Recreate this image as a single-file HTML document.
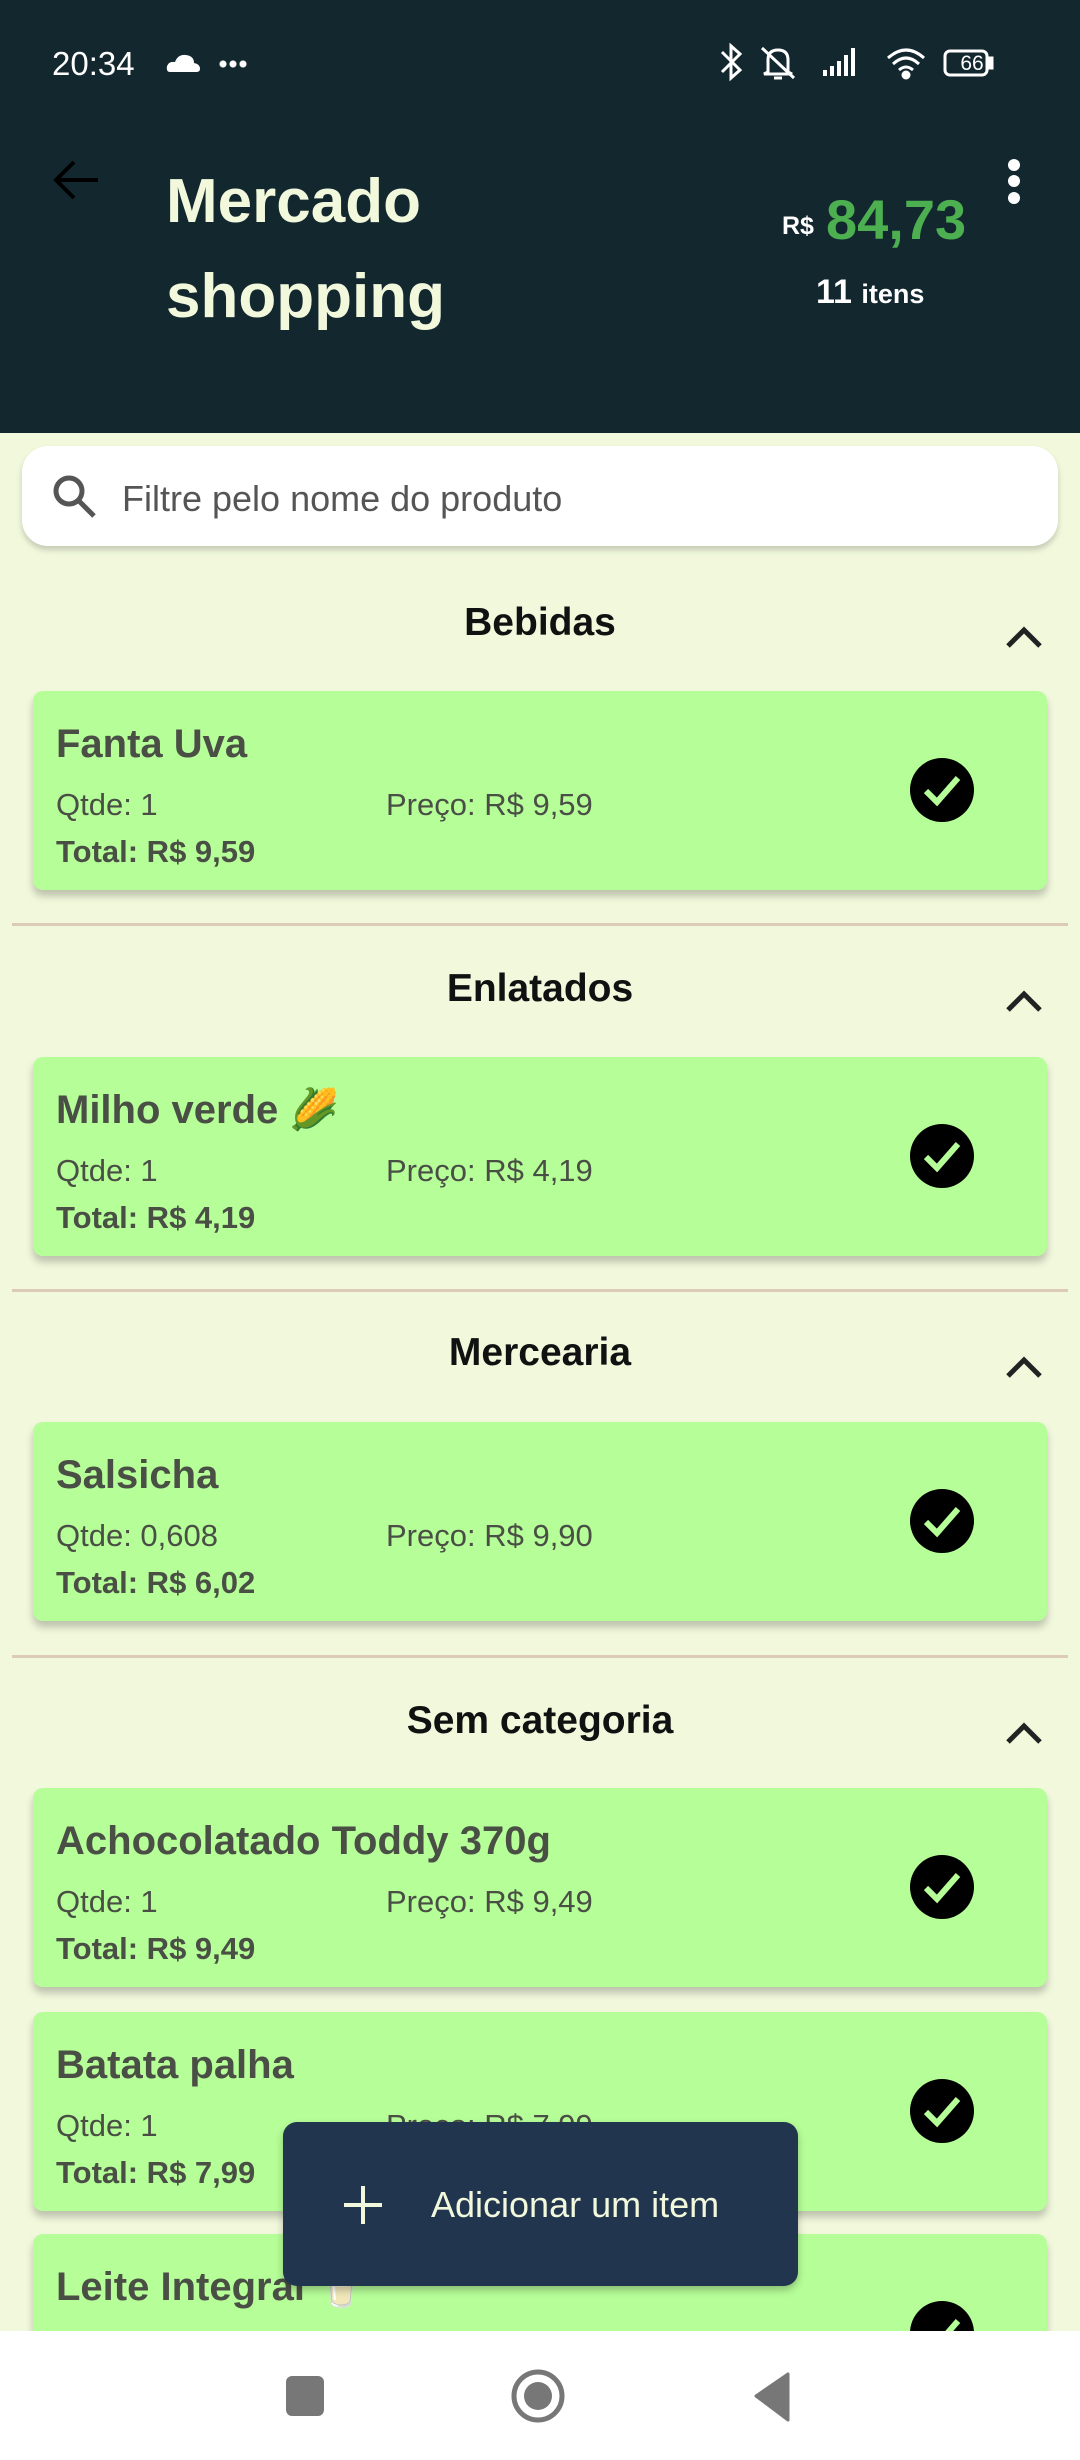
<!DOCTYPE html>
<html><head><meta charset="utf-8"><style>
*{margin:0;padding:0;box-sizing:border-box}
body{width:1080px;height:2460px;position:relative;overflow:hidden;background:#f1f8dc;font-family:"Liberation Sans",sans-serif}
.a{position:absolute}
.hdr{left:0;top:0;width:1080px;height:433px;background:#13272f}
.t{white-space:nowrap;line-height:60px;height:60px}
.sec{left:0;width:1080px;text-align:center;font-size:39px;color:#111;font-weight:bold}
.chev{left:1004px;width:40px;height:26px}
.card{left:33px;width:1014px;height:199px;background:#b6fe98;border-radius:10px;box-shadow:0 6px 8px rgba(0,0,0,.22)}
.card .nm{left:23px;top:23px;font-size:40px;color:#4a4f45;font-weight:bold}
.card .q{left:23px;top:84px;font-size:31px;color:#4a4f45}
.card .p{left:353px;top:84px;font-size:31px;color:#4a4f45}
.card .tt{left:23px;top:131px;font-size:31px;color:#4a4f45;font-weight:bold}
.card svg.ck{position:absolute;left:876px;top:66px}
.div{left:12px;width:1056px;height:3px;background:#dccbb8}
</style></head><body>
<div class="a hdr"></div>
<div class="a t" style="left:52px;top:34px;font-size:33px;color:#fff">20:34</div>
<svg class="a" style="left:166px;top:52px" width="36" height="22"><path d="M4 20 Q0 20 1 14 Q3 9 9 10 Q12 2 20 3 Q28 4 28 11 Q34 12 34 17 Q34 20 30 20Z" fill="#fff"/></svg>
<div class="a" style="left:218px;top:60px;width:30px;height:8px;background:radial-gradient(circle,#fff 3px,transparent 4px) 0 0/10px 8px repeat-x"></div>
<svg class="a" style="left:718px;top:42px" width="300" height="40" fill="none" stroke="#fff" stroke-width="3">
<path d="M4 10 L22 28 L13 36 L13 4 L22 12 L4 30"/>
<path d="M50 30 L50 18 Q50 8 60 8 Q70 8 70 18 L70 30 L74 32 L46 32Z M56 36 L64 36 M44 6 L76 36"/>
<g fill="#fff" stroke="none"><rect x="105" y="28" width="4" height="6"/><rect x="112" y="24" width="4" height="10"/><rect x="119" y="19" width="4" height="15"/><rect x="126" y="13" width="4" height="21"/><rect x="133" y="6" width="4" height="28"/></g>
<path d="M170 16 Q188 0 206 16 M175 22 Q188 10 201 22 M181 28 Q188 22 195 28"/><circle cx="188" cy="33" r="3" fill="#fff"/>
<rect x="227" y="9" width="42" height="24" rx="5"/><rect x="271" y="16" width="3" height="10" fill="#fff"/>
</svg>
<div class="a t" style="left:951px;top:34px;font-size:21px;color:#fff;width:42px;text-align:center">66</div>
<svg class="a" style="left:52px;top:156px" width="50" height="50" fill="none" stroke="#000" stroke-width="4"><path d="M46 24 L6 24 M22 6 L4 24 L22 42"/></svg>
<svg class="a" style="left:1004px;top:158px" width="20" height="48" fill="#fff"><circle cx="10" cy="7" r="6"/><circle cx="10" cy="23" r="6"/><circle cx="10" cy="40" r="6"/></svg>
<div class="a t" style="left:166px;top:162px;font-size:62px;color:#f1f8dc;height:80px;line-height:80px;font-weight:bold">Mercado</div>
<div class="a t" style="left:166px;top:257px;font-size:62px;color:#f1f8dc;height:80px;line-height:80px;font-weight:bold">shopping</div>
<div class="a t" style="left:782px;top:196px;font-size:25px;color:#fff;font-weight:bold">R$</div>
<div class="a t" style="left:826px;top:188px;font-size:56px;color:#4caf50;height:64px;line-height:64px;font-weight:bold">84,73</div>
<div class="a t" style="left:816px;top:262px;font-size:34px;color:#fff;font-weight:bold">11 <span style="font-size:27px">itens</span></div>
<div class="a" style="left:22px;top:446px;width:1036px;height:100px;background:#fff;border-radius:26px;box-shadow:0 4px 6px rgba(0,0,0,.18)"></div>
<svg class="a" style="left:50px;top:472px" width="50" height="50" fill="none" stroke="#555" stroke-width="5"><circle cx="19" cy="19" r="13"/><path d="M29 29 L44 44"/></svg>
<div class="a t" style="left:122px;top:469px;font-size:36px;color:#555">Filtre pelo nome do produto</div>

<div class="a t sec" style="top:593px">Bebidas</div>
<svg class="a chev" style="top:624px" viewBox="0 0 40 26"><path d="M4 22 L20 6 L36 22" fill="none" stroke="#222" stroke-width="5"/></svg>
<div class="a card" style="top:691px"><div class="a t nm">Fanta Uva</div><div class="a t q">Qtde: 1</div><div class="a t p">Preço: R$ 9,59</div><div class="a t tt">Total: R$ 9,59</div><svg class="ck" width="66" height="66"><circle cx="33" cy="33" r="32" fill="#000"/><path d="M17 34 L28 45 L49 21" fill="none" stroke="#b6fe98" stroke-width="6"/></svg></div>
<div class="a div" style="top:923px"></div>

<div class="a t sec" style="top:959px">Enlatados</div>
<svg class="a chev" style="top:988px" viewBox="0 0 40 26"><path d="M4 22 L20 6 L36 22" fill="none" stroke="#222" stroke-width="5"/></svg>
<div class="a card" style="top:1057px"><div class="a t nm">Milho verde 🌽</div><div class="a t q">Qtde: 1</div><div class="a t p">Preço: R$ 4,19</div><div class="a t tt">Total: R$ 4,19</div><svg class="ck" width="66" height="66"><circle cx="33" cy="33" r="32" fill="#000"/><path d="M17 34 L28 45 L49 21" fill="none" stroke="#b6fe98" stroke-width="6"/></svg></div>
<div class="a div" style="top:1289px"></div>

<div class="a t sec" style="top:1323px">Mercearia</div>
<svg class="a chev" style="top:1354px" viewBox="0 0 40 26"><path d="M4 22 L20 6 L36 22" fill="none" stroke="#222" stroke-width="5"/></svg>
<div class="a card" style="top:1422px"><div class="a t nm">Salsicha</div><div class="a t q">Qtde: 0,608</div><div class="a t p">Preço: R$ 9,90</div><div class="a t tt">Total: R$ 6,02</div><svg class="ck" width="66" height="66"><circle cx="33" cy="33" r="32" fill="#000"/><path d="M17 34 L28 45 L49 21" fill="none" stroke="#b6fe98" stroke-width="6"/></svg></div>
<div class="a div" style="top:1655px"></div>

<div class="a t sec" style="top:1691px">Sem categoria</div>
<svg class="a chev" style="top:1720px" viewBox="0 0 40 26"><path d="M4 22 L20 6 L36 22" fill="none" stroke="#222" stroke-width="5"/></svg>
<div class="a card" style="top:1788px"><div class="a t nm">Achocolatado Toddy 370g</div><div class="a t q">Qtde: 1</div><div class="a t p">Preço: R$ 9,49</div><div class="a t tt">Total: R$ 9,49</div><svg class="ck" width="66" height="66"><circle cx="33" cy="33" r="32" fill="#000"/><path d="M17 34 L28 45 L49 21" fill="none" stroke="#b6fe98" stroke-width="6"/></svg></div>
<div class="a card" style="top:2012px"><div class="a t nm">Batata palha</div><div class="a t q">Qtde: 1</div><div class="a t p">Preço: R$ 7,99</div><div class="a t tt">Total: R$ 7,99</div><svg class="ck" width="66" height="66"><circle cx="33" cy="33" r="32" fill="#000"/><path d="M17 34 L28 45 L49 21" fill="none" stroke="#b6fe98" stroke-width="6"/></svg></div>
<div class="a card" style="top:2234px"><div class="a t nm">Leite Integral 🥛</div><svg class="ck" width="66" height="66"><circle cx="33" cy="33" r="32" fill="#000"/><path d="M17 34 L28 45 L49 21" fill="none" stroke="#b6fe98" stroke-width="6"/></svg></div>

<div class="a" style="left:283px;top:2122px;width:515px;height:164px;background:#22354f;border-radius:14px;box-shadow:0 4px 8px rgba(0,0,0,.25)"></div>
<svg class="a" style="left:342px;top:2184px" width="42" height="42"><path d="M21 2 V40 M2 21 H40" stroke="#f1f8dc" stroke-width="4"/></svg>
<div class="a t" style="left:431px;top:2175px;font-size:36px;color:#f1f8dc">Adicionar um item</div>

<div class="a" style="left:0;top:2331px;width:1080px;height:129px;background:#fff"></div>
<div class="a" style="left:286px;top:2376px;width:38px;height:40px;background:#777;border-radius:6px"></div>
<svg class="a" style="left:510px;top:2368px" width="56" height="56"><circle cx="28" cy="28" r="24" fill="none" stroke="#777" stroke-width="5"/><circle cx="28" cy="28" r="14" fill="#777"/></svg>
<svg class="a" style="left:752px;top:2372px" width="40" height="50"><path d="M36 2 L36 48 L4 24Z" fill="#777" stroke="#777" stroke-width="3" stroke-linejoin="round"/></svg>
</body></html>
